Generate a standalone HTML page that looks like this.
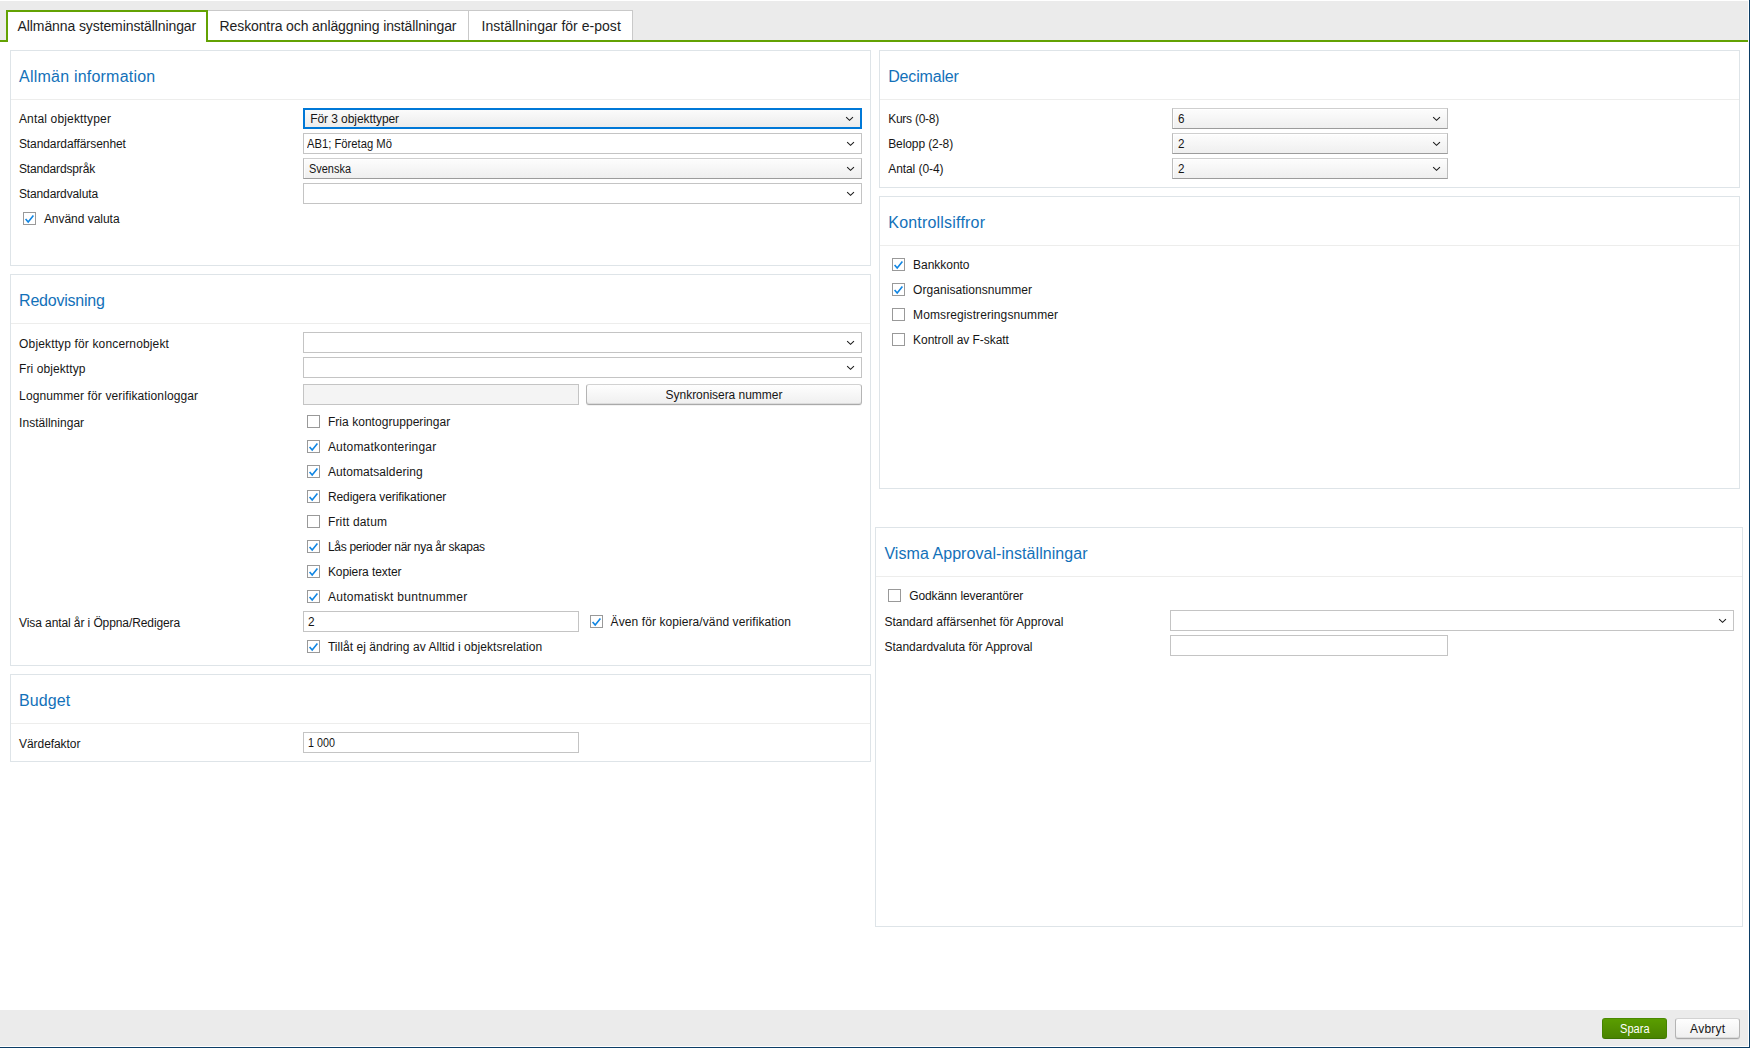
<!DOCTYPE html>
<html lang="sv"><head><meta charset="utf-8"><title>Systeminställningar</title>
<style>
html,body{margin:0;padding:0}
body{width:1750px;height:1048px;position:relative;overflow:hidden;background:#fff;font-family:"Liberation Sans",sans-serif;}
div,svg,span,h2,label{position:absolute;box-sizing:border-box;margin:0;font-weight:normal}
.tb{left:0;top:1px;width:1748px;height:39px;background:#ebebeb}
.gl{left:0;top:40px;width:1748px;height:2px;background:#63a203}
.ta{left:6px;top:10px;width:202px;height:32px;background:#fff;border:2px solid #63a203;border-bottom:0}
.tc{top:10px;height:30px;background:#fff;border-top:1px solid #c9c9c9;border-right:1px solid #c9c9c9}
.nv{background:#0b3d66}
.ft{left:0;top:1010px;width:1748px;height:36px;background:#ebebeb}
.pn{border:1px solid #dee4e8;box-sizing:content-box;background:#fff}
.sp{height:1px;background:#ededec}
.cb{border:1px solid #bcbcbc;border-top-color:#cfcfcf;border-bottom-color:#9c9c9c}
.cb.g{background:linear-gradient(#fdfdfd,#efefef);box-shadow:inset 1px 1px 0 rgba(255,255,255,.8)}
.cb.w{background:#fff;border-color:#c4c4c4}
.cb.f{border:2px solid #0078d7;background:linear-gradient(#fbfbfb,#ececec)}
.in{border:1px solid #c4c4c4;background:#fff}
.in.d{background:#f4f4f4}
.ck{width:13px;height:13px;border:1px solid #999;background:#fff}
.ck svg{left:-1px;top:-1px}
.bt{border:1px solid #b4b4b4;border-top-color:#d2d2d2;border-bottom-color:#a9a9a9;border-radius:3px;background:linear-gradient(#fefefe,#efefef);box-shadow:inset 0 -1px 0 #dcdcdc,0 1px 0 rgba(0,0,0,.05)}
.bt.gr{border-color:#4a8a00 #458300 #3c7400;background:linear-gradient(#5a9d00,#4a8400);box-shadow:none}
.x{white-space:nowrap;line-height:20px;height:20px}
.t{font-size:14px;color:#1e1e1e}
.h{font-size:16px;color:#1371b9}
.l{font-size:12px;color:#161616}
</style></head>
<body>
<div class="tb"></div><div class="gl"></div><div class="ft"></div>
<div class="nv" style="left:1749px;top:0;width:1px;height:1048px"></div><div class="nv" style="left:0;top:1047px;width:1750px;height:1px"></div>
<nav aria-label="Flikar">
<div class="tc" style="left:208px;width:261px"></div><div class="tc" style="left:469px;width:164px"></div><div class="ta"></div>
<span class="x t" style="left:17.6px;top:16.00px;letter-spacing:-0.100px;">Allmänna systeminställningar</span>
<span class="x t" style="left:219.6px;top:16.00px;letter-spacing:-0.118px;">Reskontra och anläggning inställningar</span>
<span class="x t" style="left:481.6px;top:16.00px;letter-spacing:0.029px;">Inställningar för e-post</span>
</nav>
<section aria-label="Allmän information">
<div class="pn" style="left:10px;top:50px;width:859px;height:214px"></div>
<div class="sp" style="left:11px;top:99px;width:859px"></div>
<div class="cb f" style="left:303px;top:108px;width:559px;height:21px"></div>
<svg class="cv" style="left:843px;top:114px" width="13" height="8" viewBox="0 0 13 8"><path d="M3.15 3.1 L6.55 6.3 L9.95 3.1" fill="none" stroke="#1c1c1c" stroke-width="1.1"/></svg>
<div class="cb w" style="left:303px;top:133px;width:559px;height:21px"></div>
<svg class="cv" style="left:844px;top:139px" width="13" height="8" viewBox="0 0 13 8"><path d="M3.15 3.1 L6.55 6.3 L9.95 3.1" fill="none" stroke="#1c1c1c" stroke-width="1.1"/></svg>
<div class="cb g" style="left:303px;top:158px;width:559px;height:21px"></div>
<svg class="cv" style="left:844px;top:164px" width="13" height="8" viewBox="0 0 13 8"><path d="M3.15 3.1 L6.55 6.3 L9.95 3.1" fill="none" stroke="#1c1c1c" stroke-width="1.1"/></svg>
<div class="cb w" style="left:303px;top:183px;width:559px;height:21px"></div>
<svg class="cv" style="left:844px;top:189px" width="13" height="8" viewBox="0 0 13 8"><path d="M3.15 3.1 L6.55 6.3 L9.95 3.1" fill="none" stroke="#1c1c1c" stroke-width="1.1"/></svg>
<div class="ck" style="left:23px;top:212px"><svg width="13" height="13" viewBox="0 0 13 13"><path d="M2.6 6.9 L5.2 10 L10.4 3.6" fill="none" stroke="#1186e3" stroke-width="1.6"/></svg></div>
<h2 class="x h" style="left:19.1px;top:67.31px;letter-spacing:0.212px;">Allmän information</h2>
<label class="x l" style="left:18.9px;top:108.69px;letter-spacing:0.163px;">Antal objekttyper</label>
<label class="x l" style="left:18.9px;top:133.69px;letter-spacing:-0.085px;">Standardaffärsenhet</label>
<label class="x l" style="left:18.9px;top:158.69px;letter-spacing:-0.146px;">Standardspråk</label>
<label class="x l" style="left:18.9px;top:183.69px;letter-spacing:-0.118px;">Standardvaluta</label>
<label class="x l" style="left:43.9px;top:208.69px;letter-spacing:-0.030px;">Använd valuta</label>
<label class="x l" style="left:310.2px;top:108.69px;letter-spacing:-0.072px;">För 3 objekttyper</label>
<label class="x l" style="left:306.6px;top:133.69px;transform:scaleX(0.9370);transform-origin:0 0;">AB1; Företag Mö</label>
<label class="x l" style="left:308.8px;top:158.69px;transform:scaleX(0.9124);transform-origin:0 0;">Svenska</label>
</section>
<section aria-label="Redovisning">
<div class="pn" style="left:10px;top:274px;width:859px;height:390px"></div>
<div class="sp" style="left:11px;top:323px;width:859px"></div>
<div class="cb w" style="left:303px;top:332px;width:559px;height:21px"></div>
<svg class="cv" style="left:844px;top:338px" width="13" height="8" viewBox="0 0 13 8"><path d="M3.15 3.1 L6.55 6.3 L9.95 3.1" fill="none" stroke="#1c1c1c" stroke-width="1.1"/></svg>
<div class="cb w" style="left:303px;top:357px;width:559px;height:21px"></div>
<svg class="cv" style="left:844px;top:363px" width="13" height="8" viewBox="0 0 13 8"><path d="M3.15 3.1 L6.55 6.3 L9.95 3.1" fill="none" stroke="#1c1c1c" stroke-width="1.1"/></svg>
<div class="in d" style="left:303px;top:384px;width:276px;height:21px"></div>
<div class="bt" style="left:586px;top:384px;width:276px;height:21px"></div>
<div class="ck" style="left:307px;top:415px"></div>
<div class="ck" style="left:307px;top:440px"><svg width="13" height="13" viewBox="0 0 13 13"><path d="M2.6 6.9 L5.2 10 L10.4 3.6" fill="none" stroke="#1186e3" stroke-width="1.6"/></svg></div>
<div class="ck" style="left:307px;top:465px"><svg width="13" height="13" viewBox="0 0 13 13"><path d="M2.6 6.9 L5.2 10 L10.4 3.6" fill="none" stroke="#1186e3" stroke-width="1.6"/></svg></div>
<div class="ck" style="left:307px;top:490px"><svg width="13" height="13" viewBox="0 0 13 13"><path d="M2.6 6.9 L5.2 10 L10.4 3.6" fill="none" stroke="#1186e3" stroke-width="1.6"/></svg></div>
<div class="ck" style="left:307px;top:515px"></div>
<div class="ck" style="left:307px;top:540px"><svg width="13" height="13" viewBox="0 0 13 13"><path d="M2.6 6.9 L5.2 10 L10.4 3.6" fill="none" stroke="#1186e3" stroke-width="1.6"/></svg></div>
<div class="ck" style="left:307px;top:565px"><svg width="13" height="13" viewBox="0 0 13 13"><path d="M2.6 6.9 L5.2 10 L10.4 3.6" fill="none" stroke="#1186e3" stroke-width="1.6"/></svg></div>
<div class="ck" style="left:307px;top:590px"><svg width="13" height="13" viewBox="0 0 13 13"><path d="M2.6 6.9 L5.2 10 L10.4 3.6" fill="none" stroke="#1186e3" stroke-width="1.6"/></svg></div>
<div class="in" style="left:303px;top:611px;width:276px;height:21px"></div>
<div class="ck" style="left:590px;top:615px"><svg width="13" height="13" viewBox="0 0 13 13"><path d="M2.6 6.9 L5.2 10 L10.4 3.6" fill="none" stroke="#1186e3" stroke-width="1.6"/></svg></div>
<div class="ck" style="left:307px;top:640px"><svg width="13" height="13" viewBox="0 0 13 13"><path d="M2.6 6.9 L5.2 10 L10.4 3.6" fill="none" stroke="#1186e3" stroke-width="1.6"/></svg></div>
<h2 class="x h" style="left:19.1px;top:291.31px;letter-spacing:-0.236px;">Redovisning</h2>
<label class="x l" style="left:19.1px;top:333.69px;letter-spacing:0.143px;">Objekttyp för koncernobjekt</label>
<label class="x l" style="left:19.1px;top:358.69px;letter-spacing:0.078px;">Fri objekttyp</label>
<label class="x l" style="left:19.1px;top:385.69px;letter-spacing:0.115px;">Lognummer för verifikationloggar</label>
<label class="x l" style="left:19.1px;top:412.69px;letter-spacing:0.023px;">Inställningar</label>
<label class="x l" style="left:665.6px;top:384.69px;letter-spacing:-0.032px;">Synkronisera nummer</label>
<label class="x l" style="left:327.9px;top:411.69px;letter-spacing:0.047px;">Fria kontogrupperingar</label>
<label class="x l" style="left:327.9px;top:436.69px;letter-spacing:0.210px;">Automatkonteringar</label>
<label class="x l" style="left:327.9px;top:461.69px;letter-spacing:0.094px;">Automatsaldering</label>
<label class="x l" style="left:327.9px;top:486.69px;letter-spacing:-0.076px;">Redigera verifikationer</label>
<label class="x l" style="left:327.9px;top:511.69px;letter-spacing:0.174px;">Fritt datum</label>
<label class="x l" style="left:327.9px;top:536.69px;letter-spacing:-0.284px;">Lås perioder när nya år skapas</label>
<label class="x l" style="left:327.9px;top:561.69px;letter-spacing:-0.086px;">Kopiera texter</label>
<label class="x l" style="left:327.9px;top:586.69px;letter-spacing:0.281px;">Automatiskt buntnummer</label>
<label class="x l" style="left:19.1px;top:612.69px;letter-spacing:-0.096px;">Visa antal år i Öppna/Redigera</label>
<label class="x l" style="left:307.6px;top:611.69px;transform:scaleX(0.9869);transform-origin:0 0;">2</label>
<label class="x l" style="left:610.6px;top:611.69px;letter-spacing:0.087px;">Även för kopiera/vänd verifikation</label>
<label class="x l" style="left:327.9px;top:636.69px;letter-spacing:0.042px;">Tillåt ej ändring av Alltid i objektsrelation</label>
</section>
<section aria-label="Budget">
<div class="pn" style="left:10px;top:674px;width:859px;height:86px"></div>
<div class="sp" style="left:11px;top:723px;width:859px"></div>
<div class="in" style="left:303px;top:732px;width:276px;height:21px"></div>
<h2 class="x h" style="left:19.1px;top:691.31px;letter-spacing:0.076px;">Budget</h2>
<label class="x l" style="left:19.1px;top:733.69px;letter-spacing:-0.075px;">Värdefaktor</label>
<label class="x l" style="left:308.2px;top:732.69px;transform:scaleX(0.8957);transform-origin:0 0;">1 000</label>
</section>
<section aria-label="Decimaler">
<div class="pn" style="left:879px;top:50px;width:859px;height:136px"></div>
<div class="sp" style="left:880px;top:99px;width:859px"></div>
<div class="cb g" style="left:1172px;top:108px;width:276px;height:21px"></div>
<svg class="cv" style="left:1430px;top:114px" width="13" height="8" viewBox="0 0 13 8"><path d="M3.15 3.1 L6.55 6.3 L9.95 3.1" fill="none" stroke="#1c1c1c" stroke-width="1.1"/></svg>
<div class="cb g" style="left:1172px;top:133px;width:276px;height:21px"></div>
<svg class="cv" style="left:1430px;top:139px" width="13" height="8" viewBox="0 0 13 8"><path d="M3.15 3.1 L6.55 6.3 L9.95 3.1" fill="none" stroke="#1c1c1c" stroke-width="1.1"/></svg>
<div class="cb g" style="left:1172px;top:158px;width:276px;height:21px"></div>
<svg class="cv" style="left:1430px;top:164px" width="13" height="8" viewBox="0 0 13 8"><path d="M3.15 3.1 L6.55 6.3 L9.95 3.1" fill="none" stroke="#1c1c1c" stroke-width="1.1"/></svg>
<h2 class="x h" style="left:888.2px;top:67.31px;letter-spacing:-0.164px;">Decimaler</h2>
<label class="x l" style="left:888.2px;top:108.69px;letter-spacing:-0.249px;">Kurs (0-8)</label>
<label class="x l" style="left:888.2px;top:133.69px;letter-spacing:-0.095px;">Belopp (2-8)</label>
<label class="x l" style="left:888.2px;top:158.69px;letter-spacing:-0.063px;">Antal (0-4)</label>
<label class="x l" style="left:1177.8px;top:108.69px;transform:scaleX(0.9720);transform-origin:0 0;">6</label>
<label class="x l" style="left:1177.8px;top:133.69px;transform:scaleX(0.9720);transform-origin:0 0;">2</label>
<label class="x l" style="left:1177.8px;top:158.69px;transform:scaleX(0.9720);transform-origin:0 0;">2</label>
</section>
<section aria-label="Kontrollsiffror">
<div class="pn" style="left:879px;top:196px;width:859px;height:291px"></div>
<div class="sp" style="left:880px;top:245px;width:859px"></div>
<div class="ck" style="left:892px;top:258px"><svg width="13" height="13" viewBox="0 0 13 13"><path d="M2.6 6.9 L5.2 10 L10.4 3.6" fill="none" stroke="#1186e3" stroke-width="1.6"/></svg></div>
<div class="ck" style="left:892px;top:283px"><svg width="13" height="13" viewBox="0 0 13 13"><path d="M2.6 6.9 L5.2 10 L10.4 3.6" fill="none" stroke="#1186e3" stroke-width="1.6"/></svg></div>
<div class="ck" style="left:892px;top:308px"></div>
<div class="ck" style="left:892px;top:333px"></div>
<h2 class="x h" style="left:888.3px;top:213.31px;letter-spacing:0.195px;">Kontrollsiffror</h2>
<label class="x l" style="left:913.1px;top:254.69px;letter-spacing:-0.040px;">Bankkonto</label>
<label class="x l" style="left:913.1px;top:279.69px;letter-spacing:0.052px;">Organisationsnummer</label>
<label class="x l" style="left:913.1px;top:304.69px;letter-spacing:0.100px;">Momsregistreringsnummer</label>
<label class="x l" style="left:913.1px;top:329.69px;letter-spacing:-0.050px;">Kontroll av F-skatt</label>
</section>
<section aria-label="Visma Approval-inställningar">
<div class="pn" style="left:875px;top:527px;width:866px;height:398px"></div>
<div class="sp" style="left:876px;top:576px;width:866px"></div>
<div class="ck" style="left:888px;top:589px"></div>
<div class="cb w" style="left:1170px;top:610px;width:564px;height:21px"></div>
<svg class="cv" style="left:1716px;top:616px" width="13" height="8" viewBox="0 0 13 8"><path d="M3.15 3.1 L6.55 6.3 L9.95 3.1" fill="none" stroke="#1c1c1c" stroke-width="1.1"/></svg>
<div class="in" style="left:1170px;top:635px;width:278px;height:21px"></div>
<h2 class="x h" style="left:884.4px;top:544.31px;letter-spacing:0.059px;">Visma Approval-inställningar</h2>
<label class="x l" style="left:909.2px;top:585.69px;letter-spacing:-0.104px;">Godkänn leverantörer</label>
<label class="x l" style="left:884.4px;top:611.69px;letter-spacing:-0.007px;">Standard affärsenhet för Approval</label>
<label class="x l" style="left:884.4px;top:636.69px;">Standardvaluta för Approval</label>
</section>
<footer aria-label="Knappar">
<div class="bt gr" style="left:1602px;top:1018px;width:65px;height:21px"></div>
<div class="bt" style="left:1675px;top:1018px;width:65px;height:21px"></div>
<label class="x l" style="left:1619.6px;top:1018.69px;transform:scaleX(0.9241);transform-origin:0 0;color:#fff;">Spara</label>
<label class="x l" style="left:1690.1px;top:1018.69px;letter-spacing:0.261px;">Avbryt</label>
</footer>
</body></html>
